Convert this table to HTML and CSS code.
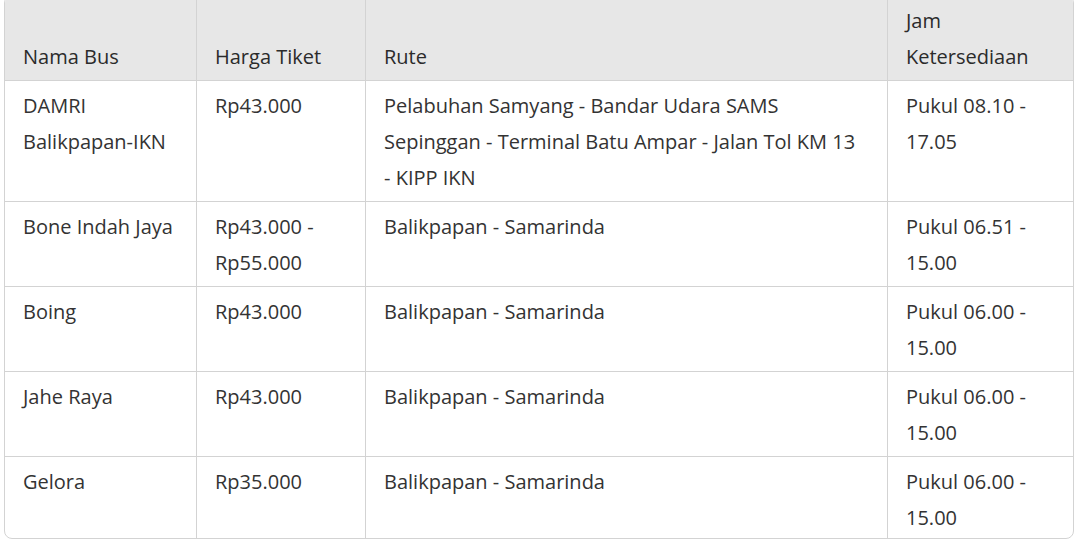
FILE: index.html
```html
<!DOCTYPE html>
<html lang="id">
<head>
<meta charset="utf-8">
<title>Jadwal Bus</title>
<link rel="stylesheet" href="styles.css">
</head>
<body>
<div class="wrap">
<table class="bus-table">
  <colgroup>
    <col class="c1"><col class="c2"><col class="c3"><col class="c4">
  </colgroup>
  <thead>
    <tr>
      <th>Nama Bus</th>
      <th>Harga Tiket</th>
      <th>Rute</th>
      <th>Jam Ketersediaan</th>
    </tr>
  </thead>
  <tbody>
    <tr>
      <td>DAMRI Balikpapan-IKN</td>
      <td>Rp43.000</td>
      <td class="route">Pelabuhan Samyang - Bandar Udara SAMS Sepinggan - Terminal Batu Ampar - Jalan Tol KM 13 - KIPP IKN</td>
      <td>Pukul 08.10 - 17.05</td>
    </tr>
    <tr>
      <td>Bone Indah Jaya</td>
      <td>Rp43.000 - Rp55.000</td>
      <td class="route">Balikpapan - Samarinda</td>
      <td>Pukul 06.51 - 15.00</td>
    </tr>
    <tr>
      <td>Boing</td>
      <td>Rp43.000</td>
      <td class="route">Balikpapan - Samarinda</td>
      <td>Pukul 06.00 - 15.00</td>
    </tr>
    <tr>
      <td>Jahe Raya</td>
      <td>Rp43.000</td>
      <td class="route">Balikpapan - Samarinda</td>
      <td>Pukul 06.00 - 15.00</td>
    </tr>
    <tr>
      <td>Gelora</td>
      <td>Rp35.000</td>
      <td class="route">Balikpapan - Samarinda</td>
      <td>Pukul 06.00 - 15.00</td>
    </tr>
  </tbody>
</table>
</div>
</body>
</html>
```
FILE: styles.css
```css
html, body {
  margin: 0;
  padding: 0;
  background: #ffffff;
}
.wrap {
  padding: 0 6px 0 4px;
  margin-top: -5px;
}
.bus-table {
  width: 1068px;
  border-collapse: separate;
  border-spacing: 0;
  table-layout: fixed;
  font-family: "Open Sans", "Noto Sans", sans-serif;
  font-size: 20px;
  line-height: 36px;
  color: #333333;
  border: 1px solid #d3d3d3;
  border-radius: 8px;
  overflow: hidden;
}
.c1 { width: 192px; }
.c2 { width: 169px; }
.c3 { width: 522px; }
.c4 { width: 185px; }
.bus-table th,
.bus-table td {
  text-align: left;
  vertical-align: top;
  padding: 7px 19px 5px 18px;
  border-right: 1px solid #d3d3d3;
  border-bottom: 1px solid #d3d3d3;
  font-weight: 400;
}
.bus-table td.route {
  padding-right: 28px;
}
.bus-table th:last-child,
.bus-table td:last-child {
  border-right: none;
}
.bus-table tbody tr:last-child td {
  border-bottom: none;
  padding-bottom: 2px;
}
.bus-table th {
  background: #e7e7e7;
  vertical-align: bottom;
  color: #2b2b2b;
}
```
